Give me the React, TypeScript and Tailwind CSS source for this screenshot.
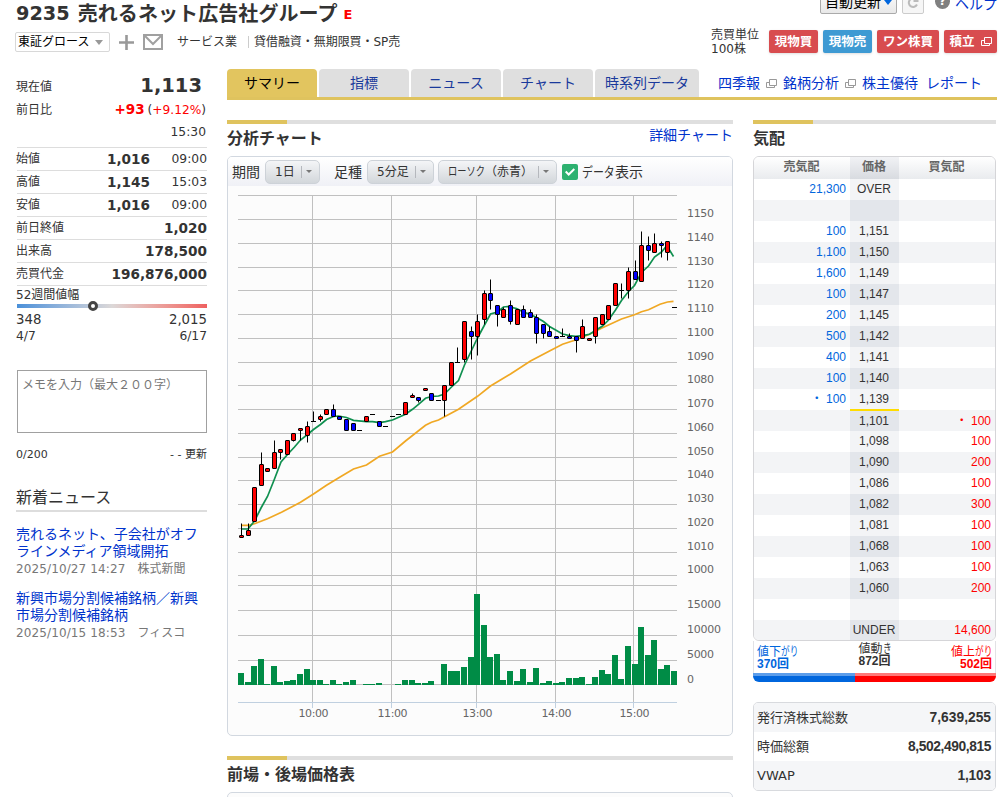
import React from "react";

type Candle = [open: number, close: number, high: number, low: number];

// 5 minute candles
const candles: Candle[] = [
  [1016, 1017, 1022, 1016],
  [1017, 1019, 1022, 1017],
  [1023, 1037, 1037, 1023],
  [1038, 1047, 1052, 1038],
  [1044, 1045, 1045, 1044],
  [1045, 1052, 1057, 1045],
  [1052, 1053, 1053, 1049],
  [1051, 1057, 1057, 1051],
  [1057, 1060, 1060, 1056.5],
  [1061, 1062, 1062, 1057],
  [1059, 1063, 1065, 1056],
  [1065, 1065, 1069, 1065],
  [1066, 1067, 1068, 1065],
  [1068, 1070, 1070, 1068],
  [1070, 1067, 1072, 1067],
  [1067, 1066, 1067, 1066],
  [1066, 1061, 1066, 1061],
  [1064, 1061, 1064, 1061],
  [1061, 1061, 1061, 1061],
  [1065, 1067, 1067, 1065],
  [1068, 1068, 1068, 1068],
  [1065, 1063, 1065, 1063],
  [1063, 1063, 1063, 1063],
  [1067, 1067, 1067, 1067],
  [1068, 1068, 1068, 1068],
  [1068, 1073, 1073, 1068],
  [1075, 1076, 1077, 1075],
  [1075, 1074, 1075, 1073],
  [1078, 1079, 1079, 1078],
  [1077, 1074, 1077, 1074],
  [1074, 1074, 1074, 1074],
  [1074, 1080, 1080, 1067],
  [1080, 1090, 1090, 1080],
  [1090, 1090, 1096, 1090],
  [1091, 1107, 1107, 1090],
  [1103, 1101, 1105, 1091],
  [1101, 1107, 1110, 1093],
  [1108, 1119, 1120, 1106],
  [1119, 1116, 1125, 1112],
  [1114, 1110, 1114, 1105],
  [1109, 1112, 1113, 1109],
  [1114, 1107, 1116, 1106],
  [1106, 1112, 1112, 1106],
  [1112, 1109, 1114, 1109],
  [1111, 1109, 1112, 1109],
  [1109, 1102, 1110, 1098],
  [1106, 1102, 1106, 1100],
  [1103, 1101, 1105, 1101],
  [1101, 1100, 1101, 1100],
  [1101, 1101, 1104, 1101],
  [1101, 1100, 1102, 1100],
  [1101, 1099, 1101, 1094],
  [1100, 1105, 1108, 1100],
  [1099, 1100, 1100, 1099],
  [1101, 1109, 1109, 1098],
  [1106, 1110, 1110, 1106],
  [1108, 1114, 1114, 1108],
  [1114, 1123, 1123, 1114],
  [1120, 1120, 1123, 1117],
  [1120, 1128, 1130, 1117],
  [1128, 1125, 1133, 1125],
  [1124, 1139, 1145, 1124],
  [1139, 1137, 1143, 1133],
  [1136, 1140, 1144, 1136],
  [1140, 1139, 1141, 1134],
  [1136, 1141, 1141, 1133],
  [1113, 1113, 1113, 1113],
];

// bar heights in px, 25px = 5000 shares
const volumes = [
  12, 3, 19, 26, 1, 19, 3, 4, 5, 11, 16, 5, 5, 1, 5, 1, 3, 5, 0, 1, 1, 2, 0, 0,
  1, 5, 5, 2, 2, 4, 0, 21, 14, 14, 18, 28, 91, 60, 28, 31, 5, 14, 4, 16, 3, 17,
  2, 4, 2, 3, 7, 7, 8, 1, 8, 15, 11, 30, 6, 39, 21, 58, 30, 45, 16, 20, 14,
];

const shortMa =
  "241.5,529 248,529 254.5,521 261,508 267.5,496.5 274.5,479 281,462 287.5,454.5 294.5,447 300.5,440 307.5,434.5 313.5,429.5 320.5,424.5 326.5,419.5 333.5,416.5 338.5,416 346.5,417.5 353.5,420.3 366.5,421.7 372.5,421.7 379.5,422.7 385.5,421.7 392.5,420 405.5,414.3 412.5,409.3 418.5,404.3 425.5,398.3 431.5,396.5 438.5,396 444.5,394 451.5,387 458.5,380.5 464.5,365 471.5,350.5 477.5,338 484.5,325 490.5,314 497.5,312 503.5,307 507.5,306.5 516.5,308.5 523.5,312 530.5,314.5 536.5,317.5 543.5,321.5 549.5,326.5 556.5,330.5 562.5,334 569.5,335.7 575.5,336.3 582.5,335.7 589.5,334.3 595.5,330.5 602.5,326 608.5,320 615.5,310 621.5,300.5 628.5,291.5 634.5,285.5 641.5,272.5 648.5,266 654.5,257 661.5,252 666.5,246 669.5,250 673.5,256.5";
const longMa =
  "241.5,525.3 248.5,525.3 254.5,523.7 267.5,518.7 281.5,512.3 300.5,502.3 313.5,494 326.5,485.3 340.5,476.7 353.5,469 366.5,465 379.5,456.3 392.5,452 405.5,441 425.5,425.3 431.5,422.3 438.5,420 444.5,416.7 458.5,409.3 477.5,396.3 490.5,386 510.5,374 530.5,361 549.5,351 562.5,344.3 575.5,340 589.5,334.3 602.5,327.7 621.5,319 634.5,314.7 641.5,311.7 648.5,309.7 660,304.3 667.5,302 673.5,301.3";

const hours = [
  { x: 312.5, label: "10:00" },
  { x: 391.5, label: "11:00" },
  { x: 476.5, label: "13:00" },
  { x: 555.5, label: "14:00" },
  { x: 633.5, label: "15:00" },
];

const priceLevels = [
  1160, 1150, 1140, 1130, 1120, 1110, 1100, 1090, 1080, 1070, 1060, 1050, 1040,
  1030, 1020, 1010, 1000,
];

const priceY = (p: number) => Math.round(337.9 - (p - 1100) * 2.374) + 0.5;

const PriceChart: React.FC = () => (
  <svg
    width="504"
    height="549"
    viewBox="228 186 504 549"
    className="block font-['DejaVu_Sans','Noto_Sans_CJK_JP',sans-serif]"
  >
    <g stroke="#c0c0c0" strokeWidth="1">
      {priceLevels.map((p) => (
        <line key={p} x1="238" x2="677" y1={priceY(p)} y2={priceY(p)} />
      ))}
      {[585.5, 610.5, 635.5, 660.5, 684.5].map((y) => (
        <line key={y} x1="238" x2="677" y1={y} y2={y} />
      ))}
      {hours.map((h) => (
        <line key={h.x} x1={h.x} x2={h.x} y1="195" y2="702" />
      ))}
    </g>
    <g stroke="#c0d0e0" strokeWidth="1">
      <line x1="238" x2="677" y1="702.5" y2="702.5" />
      {hours.map((h) => (
        <line key={h.x} x1={h.x} x2={h.x} y1="703" y2="708" />
      ))}
    </g>
    <g fill="#008c46" shapeRendering="crispEdges">
      {volumes.map((v, i) => (
        <rect key={i} x={Math.round(238 + 6.56 * i)} y={685 - v} width="6" height={v} />
      ))}
    </g>
    <polyline points={longMa} fill="none" stroke="#f0a824" strokeWidth="1.7" />
    <polyline points={shortMa} fill="none" stroke="#109050" strokeWidth="1.7" />
    {candles.map(([open, close, high, low], i) => {
      const x = Math.round(238 + 6.56 * i);
      const top = priceY(Math.max(open, close));
      const bottom = priceY(Math.min(open, close));
      return (
        <g key={i} stroke="#000" strokeWidth="1">
          {high !== low && <line x1={x + 3.5} x2={x + 3.5} y1={priceY(high)} y2={priceY(low)} />}
          {open === close ? (
            <line x1={x + 1} x2={x + 6} y1={top} y2={top} />
          ) : (
            <rect
              x={x + 1.5}
              y={top}
              width="4"
              height={bottom - top}
              rx="0.5"
              fill={close > open ? "#ff0000" : "#0000ff"}
            />
          )}
        </g>
      );
    })}
    <g fill="#666" fontSize="11">
      {priceLevels.slice(1).map((p) => (
        <text key={p} x="687" y={priceY(p) - 2.5} textLength={27}>
          {p}
        </text>
      ))}
      {[15000, 10000, 5000, 0].map((v, i) => (
        <text key={v} x="687" y={608 + i * 25} textLength={v === 0 ? 7 : v === 5000 ? 27 : 34}>
          {v}
        </text>
      ))}
      {hours.map((h) => (
        <text key={h.label} x={h.x + 1} y="717" textAnchor="middle" textLength={30}>
          {h.label}
        </text>
      ))}
    </g>
  </svg>
);

const WindowIcon: React.FC<{ color: string }> = ({ color }) => (
  <svg width="11" height="9" viewBox="0 0 11 9" fill="none" stroke={color}>
    <path d="M3.5 .5h7v6h-7z M3.5 3.5h-3v5h8v-2" />
  </svg>
);

const SectionBar: React.FC = () => (
  <div className="h-1 bg-[#dfdfdf]">
    <div className="h-1 w-[60px] bg-[#dfc35e]" />
  </div>
);

// condensed kana
const Narrow: React.FC<{ className: string; children: React.ReactNode }> = ({
  className,
  children,
}) => (
  <span className={`inline-block origin-left whitespace-nowrap text-left ${className}`}>{children}</span>
);

const ToolSelect: React.FC<{ className: string; children: React.ReactNode }> = ({
  className,
  children,
}) => (
  <button
    className={`flex h-6 items-center justify-between rounded-[5px] border border-[#cdd2d8] bg-linear-to-b from-[#f4f5f7] to-[#d3d7db] pl-[9px] text-xs whitespace-nowrap ${className}`}
  >
    <span>{children}</span>
    <span className="flex h-3 w-[18px] items-center justify-center border-l border-[#b5b8bd] pr-[3px]">
      <svg width="6" height="3" viewBox="0 0 6 3">
        <path d="M0 0h6L3 3z" fill="#777" />
      </svg>
    </span>
  </button>
);

const summary = [
  { label: "始値", value: "1,016", time: "09:00" },
  { label: "高値", value: "1,145", time: "15:03" },
  { label: "安値", value: "1,016", time: "09:00" },
  { label: "前日終値", value: "1,020" },
  { label: "出来高", value: "178,500" },
  { label: "売買代金", value: "196,876,000" },
];

const news = [
  { title: "売れるネット、子会社がオフラインメディア領域開拓", date: "2025/10/27 14:27", source: "株式新聞" },
  { title: "新興市場分割候補銘柄／新興市場分割候補銘柄", date: "2025/10/15 18:53", source: "フィスコ" },
];

const Sidebar: React.FC = () => (
  <aside className="ml-4 w-[191px] shrink-0 pt-[4px] text-xs">
    <div className="flex h-[26px] items-center justify-between">
      <span className="pt-px">現在値</span>
      <span className="pr-[5px] pb-px text-[19.5px] font-bold">1,113</span>
    </div>
    <div className="flex h-[22px] items-center justify-between">
      <span>前日比</span>
      <span className="pr-px text-[#ff0000]">
        <b className="mr-[3px] text-[13.5px]">+93</b>
        <span className="text-[12.2px]">
          <span className="text-[#333]">(</span>+9.12%<span className="text-[#333]">)</span>
        </span>
      </span>
    </div>
    <div className="flex h-[26px] items-center justify-end pr-px pb-1 text-[12.3px]">15:30</div>
    {summary.map((s) => (
      <div key={s.label} className="ml-px flex h-[23px] items-center border-t border-[#ddd]">
        <span className="-ml-px">{s.label}</span>
        <span className="ml-auto text-[13.6px] font-bold">{s.value}</span>
        {s.time && <span className="w-[57px] text-right text-[12.3px]">{s.time}</span>}
      </div>
    ))}
    <div className="ml-px h-[19px] border-t border-[#ddd] leading-[18px]">
      <span className="-ml-px">52週間値幅</span>
    </div>
    <div className="relative ml-px h-1 bg-linear-to-r from-[#4a90d9] via-[#dcd8d8] to-[#ee6060]">
      <div className="absolute -top-[3px] left-[71px] size-[10px] rounded-full border-3 border-[#444] bg-white" />
    </div>
    <div className="mt-[3px] flex h-[18px] items-center justify-between text-[13.3px]">
      <span>348</span>
      <span>2,015</span>
    </div>
    <div className="flex h-[15px] items-center justify-between text-[12.3px]">
      <span>4/7</span>
      <span>6/17</span>
    </div>
    <div className="mt-[26px] ml-px h-[63px] border border-[#a0a0a0] pt-[5px] pl-1 leading-[18px] text-[#777]">
      メモを入力（最大２００字）
    </div>
    <div className="mt-[14px] flex h-4 items-center justify-between text-[11px]">
      <span>0/200</span>
      <span>- - 更新</span>
    </div>
    <h2 className="mt-6 h-[25px] border-b-2 border-[#ddd] text-base leading-[22px]">新着ニュース</h2>
    <div className="mt-[14px] space-y-[13px]">
      {news.map((n) => (
        <div key={n.date} className="leading-[17px]">
          <a className="block w-[190px] text-sm leading-[17px] break-all text-[#0033cc]">{n.title}</a>
          <p className="pt-px -mb-px whitespace-nowrap text-[#777]">
            <span className="tracking-[0.12px]">{n.date}</span>　{n.source}
          </p>
        </div>
      ))}
    </div>
  </aside>
);

type Quote = { sell?: string; price: string; buy?: string };

const quotes: Quote[] = [
  { sell: "21,300", price: "OVER" },
  { price: "" },
  { sell: "100", price: "1,151" },
  { sell: "1,100", price: "1,150" },
  { sell: "1,600", price: "1,149" },
  { sell: "100", price: "1,147" },
  { sell: "200", price: "1,145" },
  { sell: "500", price: "1,142" },
  { sell: "400", price: "1,141" },
  { sell: "100", price: "1,140" },
  { sell: "・ 100", price: "1,139" },
  { price: "1,101", buy: "・ 100" },
  { price: "1,098", buy: "100" },
  { price: "1,090", buy: "200" },
  { price: "1,086", buy: "100" },
  { price: "1,082", buy: "300" },
  { price: "1,081", buy: "100" },
  { price: "1,068", buy: "100" },
  { price: "1,063", buy: "100" },
  { price: "1,060", buy: "200" },
  { price: "" },
  { price: "UNDER", buy: "14,600" },
];

const OrderBook: React.FC = () => (
  <div className="font-['Liberation_Sans','Noto_Sans_CJK_JP',sans-serif] text-xs">
    <div className="h-[485px] overflow-hidden rounded-md border border-[#d5d5d8]">
      <div className="grid h-[22px] grid-cols-[96px_49px_96px] text-center leading-[20px] font-bold text-[#666]">
        <span className="bg-linear-to-b from-white to-[#e9ebee] pr-px">売気配</span>
        <span className="bg-linear-to-b from-[#f1f2f5] to-[#d8dbe0] pr-px">価格</span>
        <span className="bg-linear-to-b from-white to-[#e9ebee] pr-px">買気配</span>
      </div>
      {quotes.map((q, i) => (
        <div
          key={i}
          className={`grid h-[21px] grid-cols-[96px_49px_96px] ${q.price === "1,101" ? "leading-[22px]" : "leading-[20px]"} ${i % 2 ? "bg-[#f3f4f6]" : "bg-white"}`}
        >
          <span className="h-[21px] pr-1 text-right text-[#0066dd]">{q.sell}</span>
          <span
            className={`relative h-[21px] pr-px text-center ${i % 2 ? "bg-[#e3e6eb]" : "bg-[#f3f4f6]"}`}
          >
            {q.price}
            {q.price === "1,139" && (
              <i className="absolute inset-x-0 -bottom-px z-10 h-[2px] bg-[#ffdc00]" />
            )}
          </span>
          <span className="h-[21px] pr-1 text-right text-[#ff0000]">{q.buy}</span>
        </div>
      ))}
    </div>
    <div className="grid h-8 grid-cols-3 border-x border-[#e2e2e5] px-1 leading-3">
      <div className="-ml-px pt-[5px] text-[#0066dd]">
        <p>
          値下<Narrow className="w-[17px] scale-x-[0.72]">がり</Narrow>
        </p>
        <b>370回</b>
      </div>
      <div className="pt-[2px] text-center">
        <p>
          値動<Narrow className="w-[8px] scale-x-[0.72]">き</Narrow>
        </p>
        <b>872回</b>
      </div>
      <div className="-mr-px pt-[5px] text-right text-[#ff0000]">
        <p>
          値上<Narrow className="w-[17px] scale-x-[0.72]">がり</Narrow>
        </p>
        <b>502回</b>
      </div>
    </div>
    <div className="flex h-[9px] overflow-hidden rounded-b-md">
      <div className="w-[102px] border-t-3 border-[#5c9dea] bg-[#0066dd]" />
      <div className="flex-1 border-t-3 border-[#ff7878] bg-[#ff0000]" />
    </div>
  </div>
);

const stats = [
  { label: "発行済株式総数", value: "7,639,255", tracking: "" },
  { label: "時価総額", value: "8,502,490,815", tracking: "tracking-[-0.4px]" },
  { label: "VWAP", value: "1,103", tracking: "tracking-[-0.2px]" },
];

const tabs = ["サマリー", "指標", "ニュース", "チャート", "時系列データ"];

const Header: React.FC = () => (
  <header className="flex h-[69px] justify-between">
    <div className="ml-4">
      <h1 className="flex h-[27px] items-center text-xl font-bold whitespace-nowrap">
        <span className="text-[19.3px]">9235</span>
        <span className="ml-[8px] tracking-[0.08px]">売れるネット広告社グループ</span>
        <span className="ml-[6px] pt-1 text-[13px] text-[#ff0000]">E</span>
      </h1>
      <div className="mt-[5px] flex h-5 items-center text-xs whitespace-nowrap">
        <div className="-ml-px flex h-5 w-[95px] items-center rounded-xs border border-[#d8d8d8] pl-[2px] text-black">
          東証グロース
          <svg className="ml-[6px]" width="8" height="5" viewBox="0 0 8 5">
            <path d="M0 0h8L4 5z" fill="#999" />
          </svg>
        </div>
        <svg className="ml-[9px]" width="15" height="15" viewBox="0 0 15 15">
          <path d="M7.5 0v15M0 7.5h15" stroke="#999" strokeWidth="2.6" />
        </svg>
        <svg className="ml-[9px]" width="20" height="16" viewBox="0 0 20 16" fill="none" stroke="#a0a0a0" strokeWidth="2">
          <path d="M1 1h18v14H1zM2 2l8 8 8-8" />
        </svg>
        <span className="ml-[14px]">サービス業</span>
        <span className="ml-[11px] h-3 border-l border-[#ccc]" />
        <span className="ml-[5px] tracking-[-0.05px]">貸借融資・無期限買・SP売</span>
      </div>
    </div>
    <div className="mr-[7px]">
      <div className="flex h-[14px] items-end justify-end text-sm">
        <div className="flex h-[25px] w-[77px] items-center rounded-xs border border-[#aaa] bg-linear-to-b from-white to-[#e8e8e8] pt-px pl-1 text-black">
          自動更新
          <svg className="ml-[3px]" width="8" height="5" viewBox="0 0 8 5">
            <path d="M0 0h8L4 5z" fill="#0066dd" />
          </svg>
        </div>
        <div className="ml-[5px] flex h-[24px] w-[22px] items-center justify-center rounded-xs border border-[#ccc] bg-[#f6f6f6]">
          <svg width="12" height="13" viewBox="0 0 12 13" fill="none" stroke="#bbb" strokeWidth="2">
            <path d="M9 3.4A4.3 4.3 0 1 0 10 8.500M10.500 .5v4.500H6.500" />
          </svg>
        </div>
        <div className="mb-[5px] ml-[11px] size-[15px] rounded-full bg-[#808080] text-center text-xs leading-[15px] font-bold text-white">
          ?
        </div>
        <a className="mb-px ml-[5px] leading-[18px] text-[#0033cc]">ヘルプ</a>
      </div>
      <div className="mt-[14px] flex">
        <div className="w-[58px] text-xs leading-[14px] whitespace-nowrap">
          売買単位
          <br />
          100株
        </div>
        <div className="mt-[2px] flex gap-[5px] text-center text-[12.5px] leading-[23px] font-bold text-white">
          <span className="h-[23px] w-[49px] rounded-xs bg-[#d84c4f] shadow-sm">現物買</span>
          <span className="h-[23px] w-[49px] rounded-xs bg-[#3e9ad3] shadow-sm">現物売</span>
          <span className="h-[23px] w-[62px] rounded-xs bg-[#d84c4f] shadow-sm">ワン株買</span>
          <span className="flex h-[23px] w-[53px] items-center justify-center gap-[6px] rounded-xs bg-[#d84c4f] shadow-sm">
            積立
            <WindowIcon color="#fff" />
          </span>
        </div>
      </div>
    </div>
  </header>
);

const App: React.FC = () => {
  return (
    <div className="h-[797px] w-[1004px] overflow-hidden bg-white font-['DejaVu_Sans','Noto_Sans_CJK_JP',sans-serif] text-[#333]">
      <Header />
      <div className="flex">
        <Sidebar />
        <main className="ml-5 w-[770px] shrink-0">
          <nav className="flex h-[31px] gap-[2px] border-b-3 border-[#dfc35e] text-sm leading-[28px] whitespace-nowrap">
            {tabs.map((t, i) => (
              <a
                key={t}
                className={`rounded-t text-center ${i === 4 ? "w-[104px]" : "w-[90px]"} ${i === 0 ? "bg-[#e2c55f] text-black" : "bg-[#dfdfdf] text-[#1a3a9c]"}`}
              >
                {t}
              </a>
            ))}
            <div className="ml-[17px] flex items-center text-[#0033cc]">
              <a className="mr-[6px]">四季報</a>
              <WindowIcon color="#999" />
              <a className="mr-[6px] ml-[6px]">銘柄分析</a>
              <WindowIcon color="#999" />
              <a className="ml-[6px]">株主優待</a>
              <a className="ml-[8px]">レポート</a>
            </div>
          </nav>
          <div className="mt-5 flex">
            <section className="w-[506px]">
              <SectionBar />
              <div className="flex h-8 justify-between">
                <h2 className="text-base leading-[29px] font-bold">分析チャート</h2>
                <a className="text-sm leading-[22px] text-[#0033cc]">詳細チャート</a>
              </div>
              <div className="h-[580px] overflow-hidden rounded-[5px] border border-[#d2d8e0] bg-[#fcfcfc]">
                <div className="flex h-[29px] items-center bg-linear-to-b from-white to-[#f0f1f6] pl-1 text-sm whitespace-nowrap">
                  期間
                  <ToolSelect className="ml-[5px] w-[55px]">1日</ToolSelect>
                  <span className="ml-[14px]">足種</span>
                  <ToolSelect className="ml-[5px] w-[67px]">5分足</ToolSelect>
                  <ToolSelect className="ml-[4px] w-[119px]">
                    <Narrow className="w-[37px] scale-x-[0.77]">ローソク</Narrow>（赤青）
                  </ToolSelect>
                  <span className="mr-[4px] ml-[5px] flex size-4 items-center justify-center rounded-xs bg-[#2db170]">
                    <svg width="10" height="8" viewBox="0 0 10 8" fill="none" stroke="#fff" strokeWidth="2">
                      <path d="M.7 3.500l3 3L9.300 1" />
                    </svg>
                  </span>
                  <Narrow className="w-[33px] scale-x-[0.78]">データ</Narrow>
                  <span>表示</span>
                </div>
                <PriceChart />
              </div>
              <div className="mt-5">
                <SectionBar />
                <h2 className="h-8 text-base leading-[29px] font-bold">前場・後場価格表</h2>
                <div className="h-10 rounded-[5px] border border-[#d2d8e0] bg-[#fcfcfc]" />
              </div>
            </section>
            <section className="ml-5 w-[243px]">
              <SectionBar />
              <h2 className="h-8 text-base leading-[29px] font-bold">気配</h2>
              <OrderBook />
              <div className="mt-5 overflow-hidden rounded-[5px] border border-[#d8dade]">
                {stats.map((s, i) => (
                  <div
                    key={s.label}
                    className={`flex h-[29px] items-center justify-between px-1 pt-px text-[13px] ${i % 2 ? "bg-white" : "bg-[#f5f6f8]"}`}
                  >
                    <span className="-ml-px">{s.label}</span>
                    <b
                      className={`font-['Liberation_Sans',sans-serif] text-[13.8px] ${s.tracking}`}
                    >
                      {s.value}
                    </b>
                  </div>
                ))}
              </div>
            </section>
          </div>
        </main>
      </div>
    </div>
  );
};

export default App;
